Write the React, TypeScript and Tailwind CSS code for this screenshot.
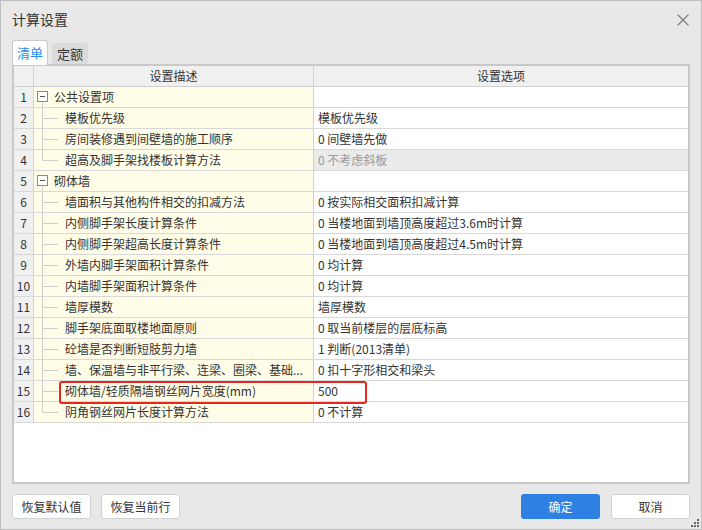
import React from 'react';

type Row = {
  no: number;
  desc: string;
  value: string;
  kind: 'group' | 'child' | 'last';
  disabled?: boolean;
};

const rows: Row[] = [
  { no: 1, desc: '公共设置项', value: '', kind: 'group' },
  { no: 2, desc: '模板优先级', value: '模板优先级', kind: 'child' },
  { no: 3, desc: '房间装修遇到间壁墙的施工顺序', value: '0 间壁墙先做', kind: 'child' },
  { no: 4, desc: '超高及脚手架找楼板计算方法', value: '0 不考虑斜板', kind: 'last', disabled: true },
  { no: 5, desc: '砌体墙', value: '', kind: 'group' },
  { no: 6, desc: '墙面积与其他构件相交的扣减方法', value: '0 按实际相交面积扣减计算', kind: 'child' },
  { no: 7, desc: '内侧脚手架长度计算条件', value: '0 当楼地面到墙顶高度超过3.6m时计算', kind: 'child' },
  { no: 8, desc: '内侧脚手架超高长度计算条件', value: '0 当楼地面到墙顶高度超过4.5m时计算', kind: 'child' },
  { no: 9, desc: '外墙内脚手架面积计算条件', value: '0 均计算', kind: 'child' },
  { no: 10, desc: '内墙脚手架面积计算条件', value: '0 均计算', kind: 'child' },
  { no: 11, desc: '墙厚模数', value: '墙厚模数', kind: 'child' },
  { no: 12, desc: '脚手架底面取楼地面原则', value: '0 取当前楼层的层底标高', kind: 'child' },
  { no: 13, desc: '砼墙是否判断短肢剪力墙', value: '1 判断(2013清单)', kind: 'child' },
  { no: 14, desc: '墙、保温墙与非平行梁、连梁、圈梁、基础...', value: '0 扣十字形相交和梁头', kind: 'child' },
  { no: 15, desc: '砌体墙/轻质隔墙钢丝网片宽度(mm)', value: '500', kind: 'child' },
  { no: 16, desc: '阴角钢丝网片长度计算方法', value: '0 不计算', kind: 'last' },
];

function TreeMark({ kind }: { kind: Row['kind'] }) {
  if (kind === 'group') {
    return (
      <svg width="20" height="20" className="shrink-0">
        <rect x="2.5" y="4.5" width="10" height="10" fill="#fff" stroke="#8a8a8a" />
        <line x1="5" y1="9.5" x2="10" y2="9.5" stroke="#555" />
        <line x1="7.5" y1="15" x2="7.5" y2="20" stroke="#cfcfcf" />
      </svg>
    );
  }
  return (
    <svg width="30" height="20" className="shrink-0">
      <line x1="7.5" y1="0" x2="7.5" y2={kind === 'last' ? 10 : 20} stroke="#cfcfcf" />
      <line x1="7.5" y1="10.5" x2="23" y2="10.5" stroke="#cfcfcf" />
    </svg>
  );
}

function Btn({ children, primary }: { children: React.ReactNode; primary?: boolean }) {
  return (
    <button
      className={
        primary
          ? 'w-[79px] h-[25px] rounded-[3px] bg-[#2e80e2] text-white text-[12px]'
          : 'w-[79px] h-[25px] rounded-[3px] bg-white border border-[#d2d2d2] text-[#333] text-[12px]'
      }
    >
      {children}
    </button>
  );
}

export default function App() {
  return (
    <div
      className="w-[702px] h-[530px] box-border border border-[#bdbdbd] bg-[#e8e8e8] flex flex-col text-[#333] relative"
      style={{ fontFamily: '"Noto Sans CJK SC", "Noto Sans", sans-serif' }}
    >
      <div className="h-[39px] flex items-center justify-between pl-[11px] pr-[12px]">
        <span className="text-[14px] text-[#333] -mt-[2px]">计算设置</span>
        <svg width="12" height="12" className="-mt-[2px]">
          <line x1="0.5" y1="0.5" x2="11.5" y2="11.5" stroke="#808080" strokeWidth="1.2" />
          <line x1="11.5" y1="0.5" x2="0.5" y2="11.5" stroke="#808080" strokeWidth="1.2" />
        </svg>
      </div>

      <div className="h-[24px] flex items-end gap-[4px] pl-[11px]">
        <div className="w-[36px] h-[25px] -mb-[1px] z-10 bg-white border border-b-0 border-[#c8c8c8] rounded-t-[3px] flex items-center justify-center text-[13px] text-[#2d8cf0]">
          清单
        </div>
        <div className="w-[36px] h-[21px] bg-[#dadada] rounded-t-[3px] flex items-center justify-center text-[13px] text-[#333]">
          定额
        </div>
      </div>

      <div className="mx-[11px] h-[420px] box-border border-2 border-[#c9c9c9] bg-white flex flex-col text-[12px] relative">
        <div className="flex h-[21px] box-border border-b border-[#d2d2d2] bg-[#f0f0f0]">
          <div className="w-[20px] box-border border-r border-[#d2d2d2]" />
          <div className="w-[280px] box-border border-r border-[#d2d2d2] flex items-center justify-center">设置描述</div>
          <div className="flex-1 flex items-center justify-center">设置选项</div>
        </div>
        {rows.map((r) => (
          <div key={r.no} className="flex h-[21px] box-border border-b border-[#d8d8d8]">
            <div className="w-[20px] box-border border-r border-[#d2d2d2] bg-[#f0f0f0] flex items-center justify-center">
              {r.no}
            </div>
            <div className="w-[280px] box-border border-r border-[#d2d2d2] bg-[#fffde8] flex items-center pl-[1px] whitespace-nowrap overflow-hidden">
              <TreeMark kind={r.kind} />
              <span className={r.kind === 'group' ? 'ml-[-1px]' : 'ml-0'}>{r.desc}</span>
            </div>
            <div
              className={
                r.disabled
                  ? 'flex-1 flex items-center pl-[4px] bg-[#ebebeb] text-[#9a9a9a] whitespace-nowrap'
                  : 'flex-1 flex items-center pl-[4px] whitespace-nowrap'
              }
            >
              {r.value}
            </div>
          </div>
        ))}
        <div className="absolute left-[45px] top-[315px] w-[308px] h-[23px] box-border border-2 border-[#e8261f] rounded-[3px]" />
      </div>

      <div className="flex items-center justify-between mt-[10px] px-[11px]">
        <div className="flex gap-[10px]">
          <Btn>恢复默认值</Btn>
          <Btn>恢复当前行</Btn>
        </div>
        <div className="flex gap-[11px]">
          <Btn primary>确定</Btn>
          <Btn>取消</Btn>
        </div>
      </div>

      <svg width="8" height="8" className="absolute right-[2px] bottom-[2px]">
        <rect x="6" y="0" width="2" height="2" fill="#666" />
        <rect x="3" y="3" width="2" height="2" fill="#666" />
        <rect x="6" y="3" width="2" height="2" fill="#666" />
        <rect x="0" y="6" width="2" height="2" fill="#666" />
        <rect x="3" y="6" width="2" height="2" fill="#666" />
        <rect x="6" y="6" width="2" height="2" fill="#666" />
      </svg>
    </div>
  );
}
